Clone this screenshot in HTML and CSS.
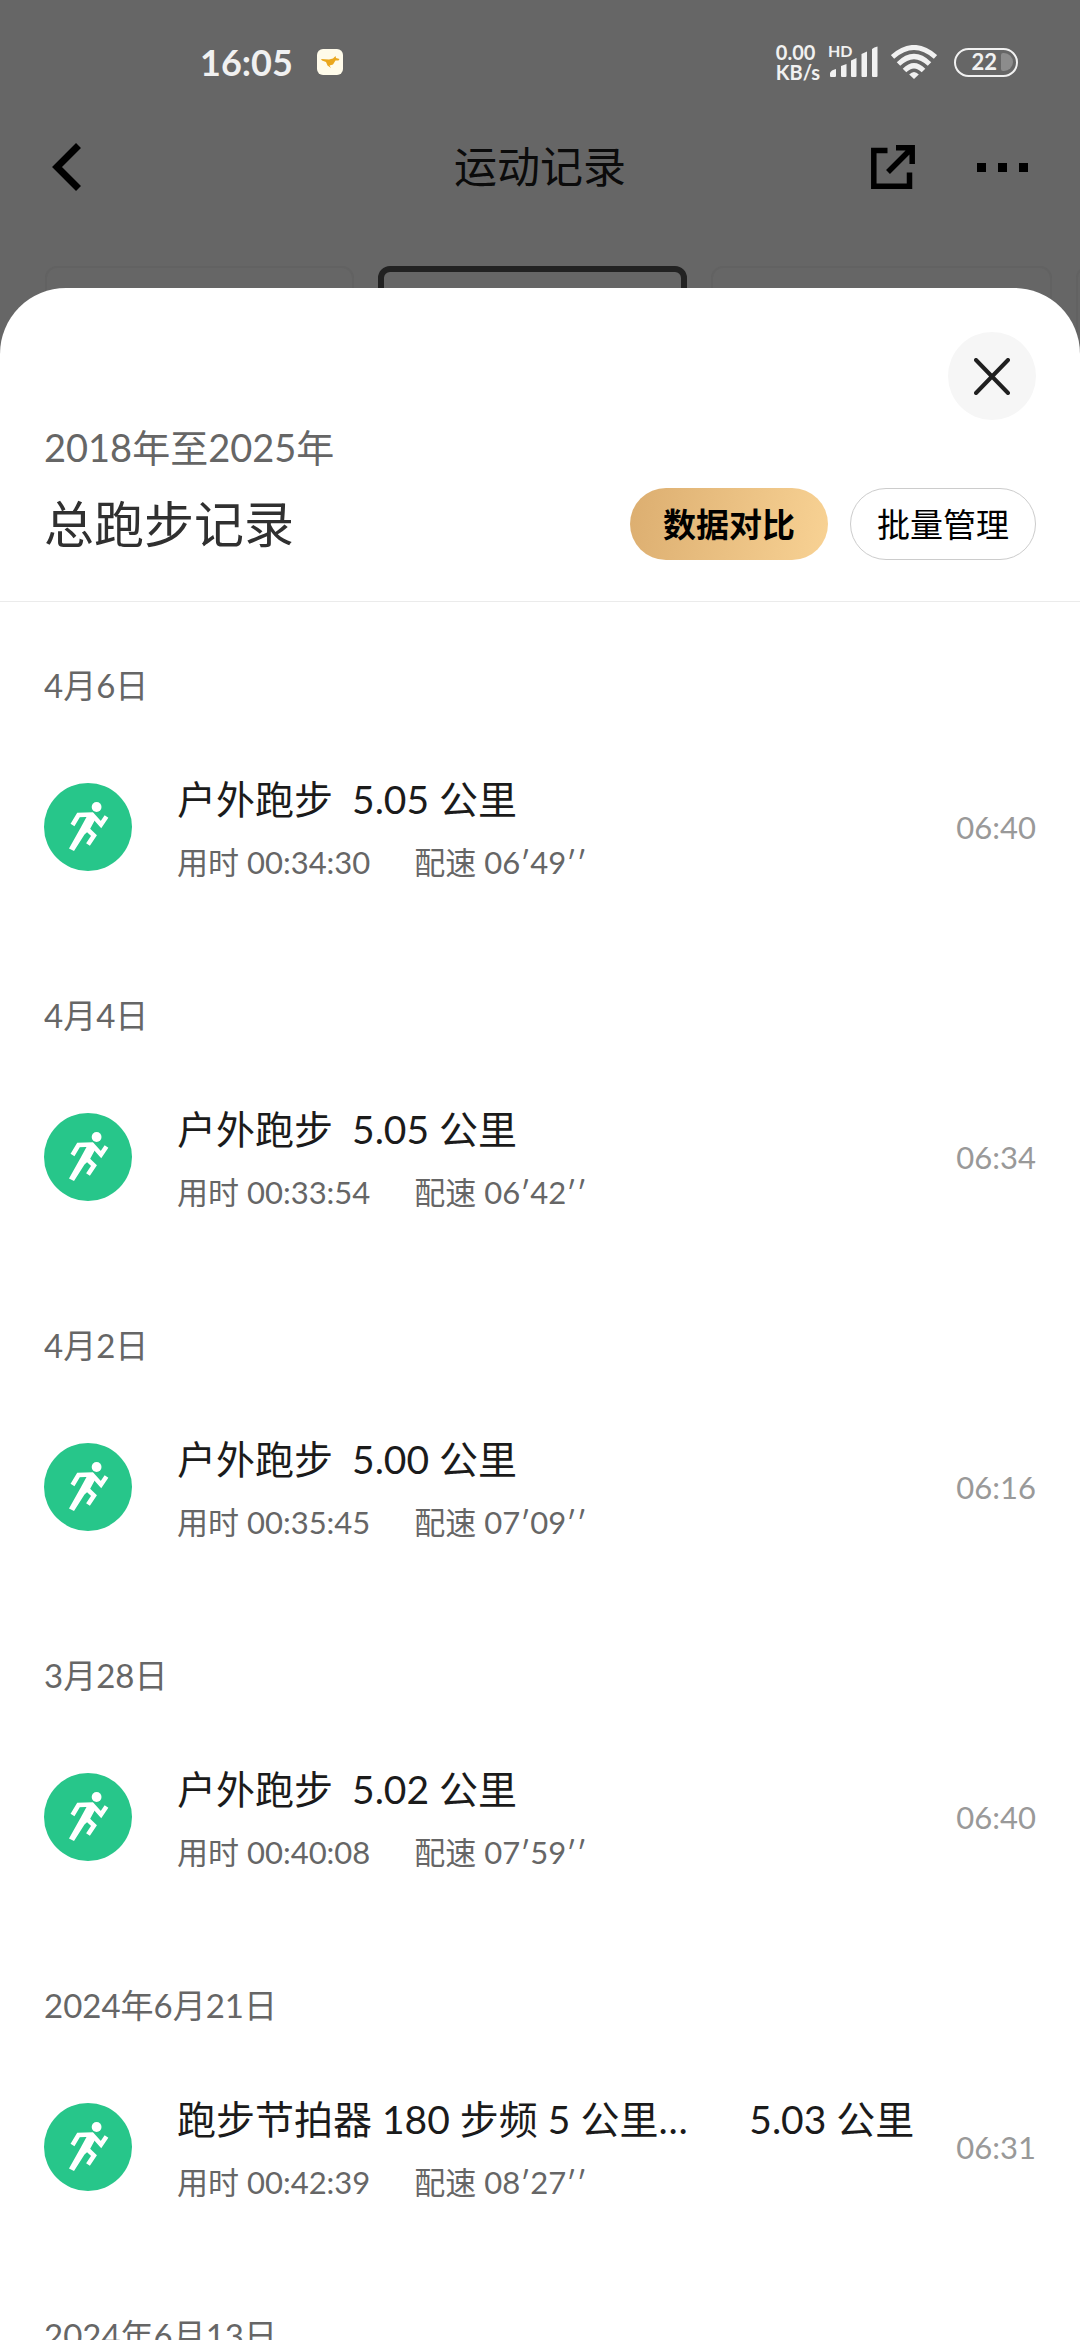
FILE: index.html
```html
<!DOCTYPE html>
<html lang="zh-CN">
<head>
<meta charset="utf-8">
<meta name="viewport" content="width=device-width, initial-scale=1">
<title>运动记录</title>
<link rel="stylesheet" href="styles.css">
</head>
<body>
<svg class="sprite" aria-hidden="true">
  <symbol id="runner" viewBox="0 0 88 88">
    <circle cx="52.6" cy="24" r="4.9" fill="#fff"/>
    <g fill="none" stroke="#fff" stroke-width="4.500">
      <path d="M28.500 42 34.500 32 48 31.500 57 41.500 62.500 33.500"/>
      <path d="M42 45 50 52.500 44 61.500"/>
    </g>
    <path d="M41 30H49L52 35 45.500 47 40.500 51.500 30 68 25 65.500 36.500 45 42.500 34Z" fill="#fff"/>
  </symbol>
</svg>

<div class="status-bar">
  <div class="status-left">
    <span class="clock">16:05</span>
    <svg class="app-icon" viewBox="0 0 26 26" aria-hidden="true"><rect width="26" height="26" rx="6" fill="#fffbea"/><path d="M4 10 12 10.500 16 9.500 18.500 7 19 9 22.500 10 21.500 11.500 18.500 11.500 16 15.500 12.500 16.500 14 19 10.500 16.500 9 13 5 11.500Z" fill="#eaa71e"/></svg>
  </div>
  <div class="status-right">
    <span class="net-speed"><span>0.00</span><span>KB/s</span></span>
    <span class="signal">
      <span class="hd">HD</span>
      <svg class="bars" viewBox="0 0 48 32" fill="#f1f1f1" aria-hidden="true"><path d="M0 27Q1 24 6 23V30Q6 31 5 31H1Q0 31 0 30ZM11 20 16.500 18V30Q16.500 31 15.500 31H12Q11 31 11 30ZM21 14.500 26.500 12V30Q26.500 31 25.500 31H22Q21 31 21 30ZM31.500 8 37 5.500V30Q37 31 36 31H32.500Q31.500 31 31.500 30ZM42 3Q44 1 47.500 0.500V30Q47.500 31 46.500 31H43Q42 31 42 30Z"/></svg>
    </span>
    <svg class="wifi" viewBox="0 0 46 34" fill="none" stroke="#f1f1f1" stroke-width="5" aria-hidden="true"><path d="M1.500 12Q23-7 44.500 12"/><path d="M7.500 19Q23 4 38.500 19"/><path d="M13.500 25.500Q23 16 32.500 25.500"/><path d="M18.200 29.500Q23 24.500 27.800 29.500L23 34Z" fill="#f1f1f1" stroke="none"/></svg>
    <span class="battery">22<span class="battery-cap"></span></span>
  </div>
</div>

<header class="nav-bar">
  <button class="icon-button" type="button" aria-label="返回"><svg width="30" height="50" viewBox="0 0 30 50" fill="none" stroke="#000" stroke-width="7"><path d="M26.500 3.500 5 25 26.500 46.500"/></svg></button>
  <h1 class="nav-title">运动记录</h1>
  <div class="nav-actions">
    <button class="icon-button" type="button" aria-label="分享"><svg width="44" height="44" viewBox="0 0 44 44" fill="none" stroke="#000" stroke-width="5.500"><path d="M16.500 5.500H2.800V41.200H38.500V27.500"/><path d="M25 2.800H41.200V19M41 3 17 27"/></svg></button>
    <button class="icon-button" type="button" aria-label="更多"><svg width="51" height="9" viewBox="0 0 51 9"><path d="M0 0H9V9H0ZM21 0H30V9H21ZM42 0H51V9H42Z"/></svg></button>
  </div>
</header>

<div class="tabs" aria-hidden="true">
  <div class="tab"></div>
  <div class="tab tab-active"></div>
  <div class="tab tab-wide"></div>
  <div class="tab"></div>
</div>

<main class="sheet">
  <div class="sheet-header">
    <button class="close" type="button" aria-label="关闭"><svg width="36" height="37" viewBox="0 0 36 37" fill="none" stroke="#202020" stroke-width="4" stroke-linecap="round"><path d="M2 2 34 35M34 2 2 35"/></svg></button>
    <p class="period">2018年至2025年</p>
    <div class="title-row">
      <h2 class="sheet-title">总跑步记录</h2>
      <button class="pill pill-gold" type="button">数据对比</button>
      <button class="pill pill-outline" type="button">批量管理</button>
    </div>
  </div>

  <div class="list">
    <section class="group">
      <h3 class="date">4月6日</h3>
      <div class="record">
        <svg class="badge" aria-hidden="true"><use href="#runner"/></svg>
        <div class="info">
          <div class="headline"><span class="name">户外跑步</span><span>5.05 公里</span></div>
          <div class="stats"><span>用时 00:34:30</span><span>配速 06′49′′</span></div>
        </div>
        <time class="time">06:40</time>
      </div>
    </section>
    <section class="group">
      <h3 class="date">4月4日</h3>
      <div class="record">
        <svg class="badge" aria-hidden="true"><use href="#runner"/></svg>
        <div class="info">
          <div class="headline"><span class="name">户外跑步</span><span>5.05 公里</span></div>
          <div class="stats"><span>用时 00:33:54</span><span>配速 06′42′′</span></div>
        </div>
        <time class="time">06:34</time>
      </div>
    </section>
    <section class="group">
      <h3 class="date">4月2日</h3>
      <div class="record">
        <svg class="badge" aria-hidden="true"><use href="#runner"/></svg>
        <div class="info">
          <div class="headline"><span class="name">户外跑步</span><span>5.00 公里</span></div>
          <div class="stats"><span>用时 00:35:45</span><span>配速 07′09′′</span></div>
        </div>
        <time class="time">06:16</time>
      </div>
    </section>
    <section class="group">
      <h3 class="date">3月28日</h3>
      <div class="record">
        <svg class="badge" aria-hidden="true"><use href="#runner"/></svg>
        <div class="info">
          <div class="headline"><span class="name">户外跑步</span><span>5.02 公里</span></div>
          <div class="stats"><span>用时 00:40:08</span><span>配速 07′59′′</span></div>
        </div>
        <time class="time">06:40</time>
      </div>
    </section>
    <section class="group">
      <h3 class="date">2024年6月21日</h3>
      <div class="record">
        <svg class="badge" aria-hidden="true"><use href="#runner"/></svg>
        <div class="info">
          <div class="headline headline-full"><span class="name">跑步节拍器 180 步频 5 公里…</span><span>5.03 公里</span></div>
          <div class="stats"><span>用时 00:42:39</span><span>配速 08′27′′</span></div>
        </div>
        <time class="time">06:31</time>
      </div>
    </section>
    <section class="group">
      <h3 class="date">2024年6月13日</h3>
    </section>
  </div>
</main>
</body>
</html>
```

FILE: styles.css
```css
* {
  box-sizing: border-box;
}

body {
  display: flex;
  flex-direction: column;
  height: 100vh;
  margin: 0;
  overflow: hidden;
  background: #666;
  color: #1b1b1b;
  font-family: Lato, "Noto Sans CJK SC", sans-serif;
}

h1,
h2,
h3,
p {
  margin: 0;
  font-weight: 400;
}

button {
  padding: 0;
  border: 0;
  background: none;
  color: #000;
  font: inherit;
  white-space: nowrap;
}

svg {
  display: block;
  flex: none;
}

.sprite {
  position: absolute;
  width: 0;
  height: 0;
}

/* Status bar */
.status-bar {
  display: flex;
  flex: none;
  align-items: center;
  justify-content: space-between;
  height: 124px;
  padding: 0 62px 0 200px;
  color: #f1f1f1;
}

.status-left,
.status-right {
  display: flex;
  align-items: center;
}

.status-left {
  gap: 24px;
}

.clock {
  font-size: 36px;
  font-weight: 700;
  line-height: 44px;
}

.app-icon {
  width: 26px;
  height: 26px;
}

.net-speed {
  display: flex;
  flex-direction: column;
  margin-right: 10px;
  font-size: 20px;
  font-weight: 700;
  line-height: 20px;
}

.signal {
  position: relative;
  margin-right: 13px;
}

.hd {
  position: absolute;
  top: -4px;
  left: -2px;
  font-size: 16px;
  font-weight: 700;
  line-height: 18px;
}

.bars {
  width: 48px;
  height: 32px;
}

.wifi {
  width: 46px;
  height: 34px;
  margin-right: 17px;
}

.battery {
  display: flex;
  align-items: center;
  justify-content: flex-end;
  gap: 4px;
  width: 64px;
  height: 29px;
  padding-right: 3px;
  border: 2px solid #f1f1f1;
  border-radius: 15px;
  font-size: 22px;
  font-weight: 700;
  line-height: 24px;
}

.battery-cap {
  width: 12px;
  height: 18px;
  border-radius: 2px 9px 9px 2px;
  background: #8c8c8c;
}

/* Navigation */
.nav-bar {
  display: grid;
  flex: none;
  grid-template-columns: 1fr auto 1fr;
  align-items: center;
  height: 86px;
  padding: 0 52px;
}

.icon-button {
  justify-self: start;
}

.nav-title {
  color: #0b0b0b;
  font-size: 43px;
  line-height: 60px;
}

.nav-actions {
  display: flex;
  align-items: center;
  justify-self: end;
  gap: 62px;
}

/* Tabs behind the sheet */
.tabs {
  display: flex;
  flex: none;
  gap: 24px;
  height: 100px;
  margin-top: 56px;
  padding-left: 45px;
  overflow: hidden;
}

.tab {
  flex: none;
  width: 309px;
  border: 2px solid #626262;
  border-radius: 12px;
}

.tab-active {
  border: 6px solid #222;
}

.tab-wide {
  width: 341px;
}

/* Sheet */
.sheet {
  position: relative;
  display: flex;
  flex: 1;
  flex-direction: column;
  min-height: 0;
  margin-top: -78px;
  border-radius: 66px 66px 0 0;
  background: #fff;
}

.sheet-header {
  display: flex;
  flex: none;
  flex-direction: column;
  padding: 44px 44px 41px;
  border-bottom: 1px solid #ebebeb;
}

.close {
  display: flex;
  align-items: center;
  justify-content: center;
  align-self: flex-end;
  width: 88px;
  height: 88px;
  border-radius: 50%;
  background: #f6f6f6;
}

.period {
  color: #666;
  font-size: 38px;
  line-height: 54px;
}

.title-row {
  display: flex;
  align-items: center;
  gap: 22px;
  margin-top: 14px;
}

.sheet-title {
  flex: 1;
  color: #303030;
  font-size: 50px;
  line-height: 72px;
}

.pill {
  height: 72px;
  border-radius: 36px;
  font-size: 33px;
  line-height: 48px;
}

.pill-gold {
  padding: 0 33px;
  background: linear-gradient(100deg, #dcae70, #f8d294);
  font-weight: 700;
}

.pill-outline {
  padding: 0 26px;
  border: 1px solid #ccc;
}

/* Records */
.list {
  flex: 1;
  min-height: 0;
  overflow-y: auto;
  scrollbar-width: none;
}

.group {
  padding: 63px 44px 50px;
}

.date {
  color: #666;
  font-size: 33px;
  line-height: 40px;
}

.record {
  display: flex;
  align-items: center;
  margin-top: 67px;
}

.badge {
  width: 88px;
  height: 88px;
  margin-right: 45px;
  border-radius: 50%;
  background: #27c68a;
}

.info {
  flex: 1;
  min-width: 0;
}

.headline {
  display: flex;
  gap: 19px;
  font-size: 39px;
  line-height: 54px;
  white-space: nowrap;
}

.headline-full {
  justify-content: space-between;
}

.name {
  overflow: hidden;
  text-overflow: ellipsis;
}

.stats {
  display: flex;
  gap: 44px;
  margin-top: 16px;
  color: #666;
  font-size: 31px;
  line-height: 40px;
}

.time {
  margin-left: 42px;
  color: #999;
  font-size: 31px;
  line-height: 40px;
}
```
